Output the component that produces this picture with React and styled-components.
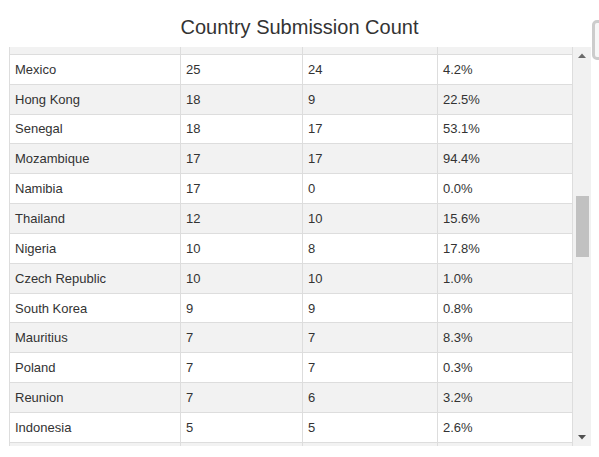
import React, { useLayoutEffect, useRef } from "react";
import styled, { createGlobalStyle } from "styled-components";

const ROW_H = 29.85;

const GlobalStyle = createGlobalStyle`
  html, body {
    margin: 0;
    padding: 0;
    background: #ffffff;
    overflow: hidden;
    font-family: "Liberation Sans", Arial, sans-serif;
    color: #333333;
  }
`;

const Page = styled.div`
  position: relative;
  width: 599px;
  height: 457px;
`;

const Title = styled.h2`
  margin: 0;
  padding: 15px 0 8px;
  font-size: 20px;
  line-height: 24px;
  font-weight: normal;
  text-align: center;
  color: #333333;
`;

const Frame = styled.div`
  display: flex;
  margin-left: 9px;
  width: 582px;
  height: 399px;
`;

const Viewport = styled.div`
  width: 564px;
  border-left: 1px solid #dddddd;
  overflow: hidden;
`;

const Row = styled.div`
  display: grid;
  grid-template-columns: 171px 122px 135px 135px;
  height: ${ROW_H}px;
  box-sizing: border-box;
  background: ${(p) => (p.$striped ? "#f2f2f2" : "#ffffff")};
`;

const Cell = styled.div`
  display: flex;
  align-items: center;
  padding: 0 5px;
  border-right: 1px solid #dddddd;
  border-bottom: 1px solid #dddddd;
  font-size: 13px;
  color: #333333;
  white-space: nowrap;
  overflow: hidden;
`;

const Scrollbar = styled.div`
  display: flex;
  flex-direction: column;
  width: 18px;
  background: #f1f1f1;
`;

const ArrowButton = styled.div`
  height: 17px;
  display: flex;
  align-items: center;
  justify-content: center;
  flex: none;
`;

const Track = styled.div`
  flex: 1;
  display: flex;
  flex-direction: column;
`;

const Thumb = styled.div`
  width: 13px;
  margin-left: 3px;
  background: #c1c1c1;
`;

const ExportButton = styled.div`
  position: absolute;
  left: 592px;
  top: 20px;
  width: 24px;
  height: 34px;
  border: 3px solid #cccccc;
  border-radius: 5px;
  background: #f7f7f7;
`;

const rows = [
  ["", "", "", ""],
  ["Mexico", "25", "24", "4.2%"],
  ["Hong Kong", "18", "9", "22.5%"],
  ["Senegal", "18", "17", "53.1%"],
  ["Mozambique", "17", "17", "94.4%"],
  ["Namibia", "17", "0", "0.0%"],
  ["Thailand", "12", "10", "15.6%"],
  ["Nigeria", "10", "8", "17.8%"],
  ["Czech Republic", "10", "10", "1.0%"],
  ["South Korea", "9", "9", "0.8%"],
  ["Mauritius", "7", "7", "8.3%"],
  ["Poland", "7", "7", "0.3%"],
  ["Reunion", "7", "6", "3.2%"],
  ["Indonesia", "5", "5", "2.6%"],
  ["", "", "", ""],
];

const Arrow = ({ up, color }) => (
  <svg width="8" height="5" viewBox="0 0 8 5">
    <path d={up ? "M0 5 L4 0.5 L8 5 Z" : "M0 0 L4 4.5 L8 0 Z"} fill={color} />
  </svg>
);

export default function App() {
  const vpRef = useRef(null);
  useLayoutEffect(() => {
    if (vpRef.current) vpRef.current.scrollTop = ROW_H - 8;
  }, []);

  return (
    <Page>
      <GlobalStyle />
      <Title>Country Submission Count</Title>
      <Frame>
        <Viewport ref={vpRef}>
          {rows.map((r, i) => (
            <Row key={i} $striped={i % 2 === 0}>
              {r.map((c, j) => (
                <Cell key={j}>{c}</Cell>
              ))}
            </Row>
          ))}
        </Viewport>
        <Scrollbar>
          <ArrowButton>
            <Arrow up color="#6a6a6a" />
          </ArrowButton>
          <Track>
            <Thumb style={{ marginTop: 132, height: 61 }} />
          </Track>
          <ArrowButton>
            <Arrow color="#505050" />
          </ArrowButton>
        </Scrollbar>
      </Frame>
      <ExportButton />
    </Page>
  );
}
